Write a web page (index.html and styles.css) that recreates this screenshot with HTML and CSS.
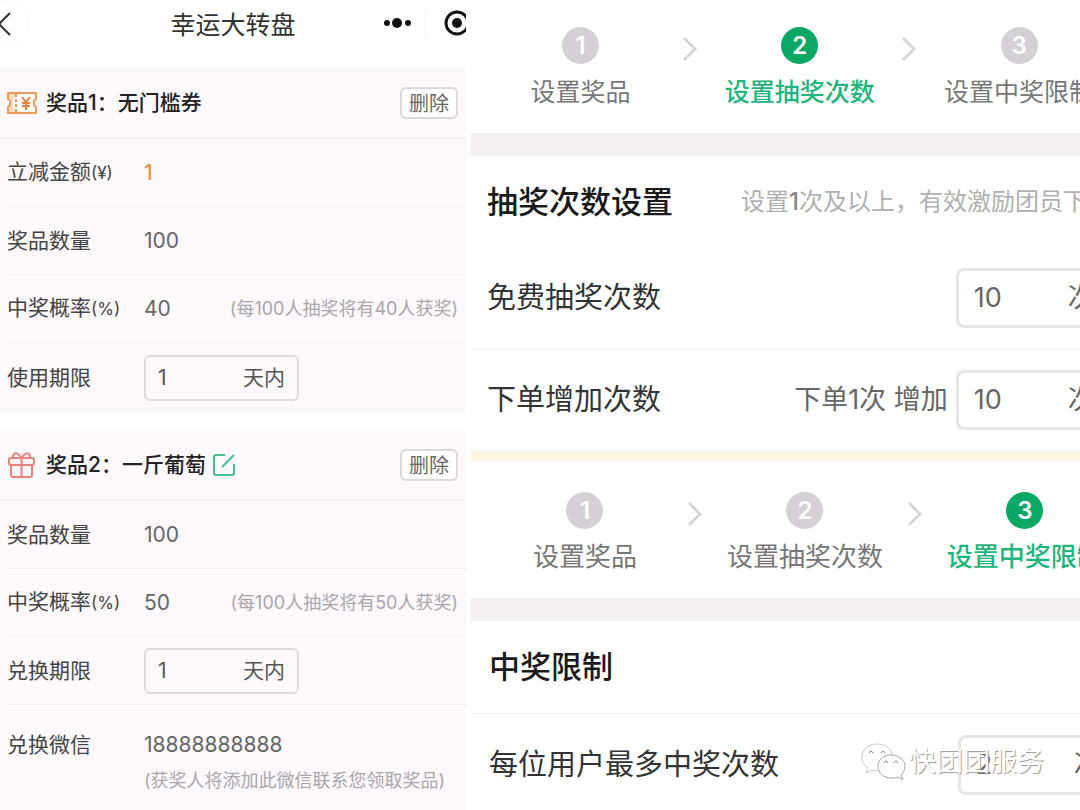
FILE: index.html
```
<!DOCTYPE html>
<html lang="zh-CN">
<head>
    <meta charset="UTF-8">
    <meta name="viewport" content="width=device-width, initial-scale=1.0">
    <title>幸运大转盘</title>
    <link rel="stylesheet" href="styles.css">
</head>
<body>
    <div class="page">
        <!-- 左侧：奖品设置 -->
        <div class="prizes">
            <header class="topbar">
                <button class="back" type="button" aria-label="返回">
                    <svg width="30" height="46" viewBox="0 0 30 46" fill="none">
                        <circle cx="6" cy="22" r="22" stroke="#f8f8f8"/>
                        <path d="M10 11L-1 22L10 33" stroke="#333" stroke-width="2"/>
                    </svg>
                </button>
                <h1 class="topbar-title">幸运大转盘</h1>
                <div class="capsule">
                    <button type="button" aria-label="更多">
                        <svg width="56" height="46" viewBox="0 0 56 46">
                            <circle cx="17" cy="21" r="3" fill="#111"/>
                            <circle cx="27" cy="21" r="5" fill="#111"/>
                            <circle cx="38" cy="21" r="3" fill="#111"/>
                            <path d="M55.500 7V35" stroke="#f3f3f3"/>
                        </svg>
                    </button>
                    <button type="button" aria-label="关闭">
                        <svg width="40" height="46" viewBox="0 0 40 46">
                            <circle cx="31" cy="21" r="11" fill="none" stroke="#111" stroke-width="3"/>
                            <circle cx="31" cy="21" r="5" fill="#111"/>
                        </svg>
                    </button>
                </div>
            </header>

            <section class="prize">
                <div class="prize-head">
                    <svg class="prize-icon" width="30" height="26" viewBox="0 0 30 26" fill="none" stroke="#ea9a5c" stroke-width="2">
                        <path d="M1 3H29V9C26 10 26 16 29 17V23H1V17C4 16 4 10 1 9Z" fill="#fff" stroke-linejoin="round"/>
                        <path d="M2 4H9V7L6 9V17L9 19V22H2V18C5 16 5 10 2 8Z" fill="#f9dcc0" stroke="none"/>
                        <path d="M9 3V7M9 9V12M9 14V17M9 19V23"/>
                        <path d="M15 7L19 12L23 7M19 12V20M15 13H23M15 16H23" stroke="#ec7f3c"/>
                    </svg>
                    <h2>奖品1：无门槛券</h2>
                    <button class="delete" type="button">删除</button>
                </div>
                <div class="row">
                    <label for="p1-amount">立减金额<small>(¥)</small></label>
                    <input class="value amount" id="p1-amount" value="1">
                </div>
                <div class="row">
                    <label for="p1-count">奖品数量</label>
                    <input class="value" id="p1-count" value="100">
                </div>
                <div class="row">
                    <label for="p1-rate">中奖概率<small>(%)</small></label>
                    <input class="value" id="p1-rate" value="40">
                    <span class="note">(每100人抽奖将有40人获奖)</span>
                </div>
                <div class="row last">
                    <label for="p1-days">使用期限</label>
                    <div class="box">
                        <input id="p1-days" value="1">
                        <span>天内</span>
                    </div>
                </div>
            </section>

            <section class="prize">
                <div class="prize-head">
                    <svg class="prize-icon" width="30" height="26" viewBox="0 0 30 26" fill="none" stroke="#e8837b" stroke-width="2" stroke-linejoin="round">
                        <rect x="2" y="6" width="25" height="7" rx="2"/>
                        <path d="M4 13V23Q4 25 6 25H23Q25 25 25 23V13M14.500 6V25"/>
                        <path d="M14.500 6C12 2 9 0 7 2C5 4 6 6 8 6M14.500 6C17 2 20 0 22 2C24 4 23 6 21 6"/>
                    </svg>
                    <h2>奖品2：一斤葡萄</h2>
                    <button class="edit" type="button" aria-label="编辑">
                        <svg width="24" height="24" viewBox="0 0 24 24" fill="none" stroke="#45c18c" stroke-width="2">
                            <path d="M13 2H4Q2 2 2 4V20Q2 22 4 22H20Q22 22 22 20V11"/>
                            <path d="M10 14L22 2"/>
                        </svg>
                    </button>
                    <button class="delete" type="button">删除</button>
                </div>
                <div class="row">
                    <label for="p2-count">奖品数量</label>
                    <input class="value" id="p2-count" value="100">
                </div>
                <div class="row">
                    <label for="p2-rate">中奖概率<small>(%)</small></label>
                    <input class="value" id="p2-rate" value="50">
                    <span class="note">(每100人抽奖将有50人获奖)</span>
                </div>
                <div class="row">
                    <label for="p2-days">兑换期限</label>
                    <div class="box">
                        <input id="p2-days" value="1">
                        <span>天内</span>
                    </div>
                </div>
                <div class="row contact">
                    <label for="p2-wechat">兑换微信</label>
                    <div>
                        <input class="value phone" id="p2-wechat" value="18888888888">
                        <p class="note">(获奖人将添加此微信联系您领取奖品)</p>
                    </div>
                </div>
            </section>
        </div>

        <!-- 右侧：抽奖次数、中奖限制 -->
        <div class="rules">
            <section class="screen">
                <div class="steps">
                    <div class="step"><b>1</b><span>设置奖品</span></div>
                    <svg class="arrow" width="14" height="24" viewBox="0 0 14 24" fill="none" stroke="#d6d4d6" stroke-width="3"><path d="M1 1L12 12L1 23"/></svg>
                    <div class="step active"><b>2</b><span>设置抽奖次数</span></div>
                    <svg class="arrow" width="14" height="24" viewBox="0 0 14 24" fill="none" stroke="#d6d4d6" stroke-width="3"><path d="M1 1L12 12L1 23"/></svg>
                    <div class="step"><b>3</b><span>设置中奖限制</span></div>
                </div>
                <div class="rule-head">
                    <h2>抽奖次数设置</h2>
                    <p>设置<strong>1</strong>次及以上，有效激励团员下</p>
                </div>
                <div class="rule">
                    <label for="free">免费抽奖次数</label>
                    <div class="box big">
                        <input id="free" value="10">
                        <span>次</span>
                    </div>
                </div>
                <div class="rule">
                    <label for="order">下单增加次数</label>
                    <span class="hint">下单1次 增加</span>
                    <div class="box big">
                        <input id="order" value="10">
                        <span>次</span>
                    </div>
                </div>
            </section>

            <section class="screen second">
                <div class="steps">
                    <div class="step"><b>1</b><span>设置奖品</span></div>
                    <svg class="arrow" width="14" height="24" viewBox="0 0 14 24" fill="none" stroke="#d6d4d6" stroke-width="3"><path d="M1 1L12 12L1 23"/></svg>
                    <div class="step"><b>2</b><span>设置抽奖次数</span></div>
                    <svg class="arrow" width="14" height="24" viewBox="0 0 14 24" fill="none" stroke="#d6d4d6" stroke-width="3"><path d="M1 1L12 12L1 23"/></svg>
                    <div class="step active"><b>3</b><span>设置中奖限制</span></div>
                </div>
                <div class="rule-head">
                    <h2>中奖限制</h2>
                </div>
                <div class="rule">
                    <label for="limit">每位用户最多中奖次数</label>
                    <div class="box big">
                        <input id="limit" value="2">
                        <span>次</span>
                    </div>
                </div>
            </section>
        </div>

        <!-- 水印 -->
        <div class="watermark">
            <svg width="46" height="40" viewBox="0 0 46 40" fill="#fff" stroke="#a6a6a6">
                <path d="M17 2C8 2 2 8 2 15C2 20 4 23 8 26L6 31L12 28C15 29 20 29 22 28C32 26 34 20 32 12C30 5 24 2 17 2Z" stroke="#c9c9c9"/>
                <path d="M31 13C23 13 18 18 18 24C18 31 24 36 31 36C34 36 36 36 38 35L43 38L41 33C43 31 45 28 45 24C45 18 39 13 31 13Z"/>
                <path d="M9 11Q11 7 13 11M21 11Q23 7 25 11M24 21Q26 17 28 21M34 21Q36 17 38 21" fill="none" stroke="#888"/>
            </svg>
            <span>快团团服务</span>
        </div>
    </div>
</body>
</html>
```
FILE: styles.css
```
* {
    box-sizing: border-box;
}
body {
    margin: 0;
    background: #fff;
    color: #444;
    font-family: Inter, "Noto Sans CJK SC", sans-serif;
    font-size: 21px;
    line-height: 28px;
}
h1, h2, p {
    margin: 0;
}
button, input {
    font: inherit;
    color: inherit;
    border: 0;
    padding: 0;
    background: none;
}
input {
    min-width: 0;
    outline: none;
}
svg {
    display: block;
    flex: none;
}
.page {
    position: relative;
    display: grid;
    grid-template-columns: 466fr 609fr;
    gap: 5px;
    height: 100vh;
    overflow: hidden;
}

/* 顶部导航 */
.prizes {
    min-width: 0;
    display: flex;
    flex-direction: column;
}
.topbar {
    display: grid;
    grid-template-columns: 1fr auto 1fr;
    align-items: center;
    height: 68px;
    padding-bottom: 19px;
}
.back {
    justify-self: start;
}
.topbar-title {
    font-size: 25px;
    font-weight: 400;
    color: #333;
}
.capsule {
    justify-self: end;
    display: flex;
}
.capsule svg {
    overflow: hidden;
}

/* 奖品 */
.prize {
    background: #fdf8fc;
}
.prize + .prize {
    margin-top: 18px;
    flex: 1;
}
.prize-head {
    display: flex;
    align-items: center;
    height: 71px;
    padding: 0 8px 0 7px;
    border-bottom: 2px solid #f6f1f5;
}
.prize-icon {
    margin-right: 9px;
}
.prize-head h2 {
    font-size: 21px;
    font-weight: 500;
    color: #222;
}
.edit {
    margin-left: 6px;
}
.delete {
    margin-left: auto;
    width: 58px;
    height: 32px;
    border: 2px solid #dcd9dc;
    border-radius: 6px;
    background: #fff;
    font-size: 20px;
    line-height: 30px;
    color: #666;
}
.row {
    display: flex;
    align-items: center;
    height: 68px;
    margin-left: 7px;
    padding-right: 8px;
    border-bottom: 1px solid #f3eef2;
}
.row.last {
    height: 69px;
    border-bottom: 0;
}
.row label {
    width: 137px;
    flex: none;
}
.row small {
    font-size: 17px;
}
.value {
    width: 70px;
    color: #666;
}
.amount {
    color: #e8964a;
    font-weight: 500;
}
.phone {
    display: block;
    width: 160px;
    height: 28px;
}
.note {
    margin-left: auto;
    font-size: 18px;
    color: #aaa6aa;
    white-space: nowrap;
}
.contact {
    align-items: flex-start;
    height: auto;
    padding-top: 26px;
    border-bottom: 0;
}
.contact .note {
    margin-top: 8px;
}
.box {
    display: flex;
    align-items: center;
    justify-content: space-between;
    width: 155px;
    height: 46px;
    padding: 0 12px;
    border: 2px solid #dfdadf;
    border-radius: 6px;
    color: #555;
}
.box input {
    width: 60px;
}

/* 步骤条 */
.rules {
    min-width: 0;
}
.screen {
    width: 108%;
}
.steps {
    display: flex;
    height: 156px;
    padding-top: 27px;
    border-bottom: 23px solid #f3eff2;
}
.step {
    flex: 1;
    display: flex;
    flex-direction: column;
    align-items: center;
    gap: 14px;
    font-size: 25px;
    color: #777;
    white-space: nowrap;
}
.step b {
    width: 37px;
    height: 37px;
    border-radius: 50%;
    background: #d5d0d6;
    color: #fff;
    font-size: 24px;
    font-weight: 600;
    line-height: 37px;
    text-align: center;
}
.step.active {
    color: #1fb57c;
    font-weight: 500;
}
.step.active b {
    background: #0aa765;
}
.arrow {
    margin: 10px -7px 0;
}

/* 规则 */
.rule-head {
    display: flex;
    align-items: center;
    gap: 68px;
    height: 92px;
    padding-left: 16px;
    white-space: nowrap;
}
.rule-head h2 {
    font-size: 31px;
    font-weight: 500;
    color: #1a1a1a;
}
.rule-head p {
    font-size: 24px;
    color: #b0b0b0;
}
.rule-head strong {
    font-weight: 500;
    color: #888;
}
.rule {
    display: flex;
    align-items: center;
    height: 102px;
    padding: 0 16px;
    border-bottom: 2px solid #f7f6f7;
}
.rule label {
    margin-right: auto;
    font-size: 29px;
    color: #333;
}
.hint {
    margin-right: 8px;
    font-size: 27px;
    color: #666;
}
.box.big {
    width: 157px;
    height: 60px;
    padding: 0 15px;
    border: 3px solid #e6e5e6;
    border-radius: 8px;
    font-size: 27px;
    color: #666;
}
.second {
    width: 109%;
    border-top: 9px solid #fff5e3;
}
.second .steps {
    height: 160px;
    padding: 31px 0 0 4px;
}
.second .step {
    font-size: 26px;
}
.second .rule-head {
    height: 93px;
    padding-left: 18px;
    border-bottom: 1px solid #f3f2f3;
}
.second .rule {
    height: 104px;
    padding-left: 18px;
}
.second .box {
    width: 161px;
}

.watermark {
    position: absolute;
    right: 36px;
    bottom: 28px;
    display: flex;
    align-items: center;
    gap: 3px;
    font-size: 27px;
    color: #fff;
    text-shadow: 1px 1px 1px #999;
}
```
